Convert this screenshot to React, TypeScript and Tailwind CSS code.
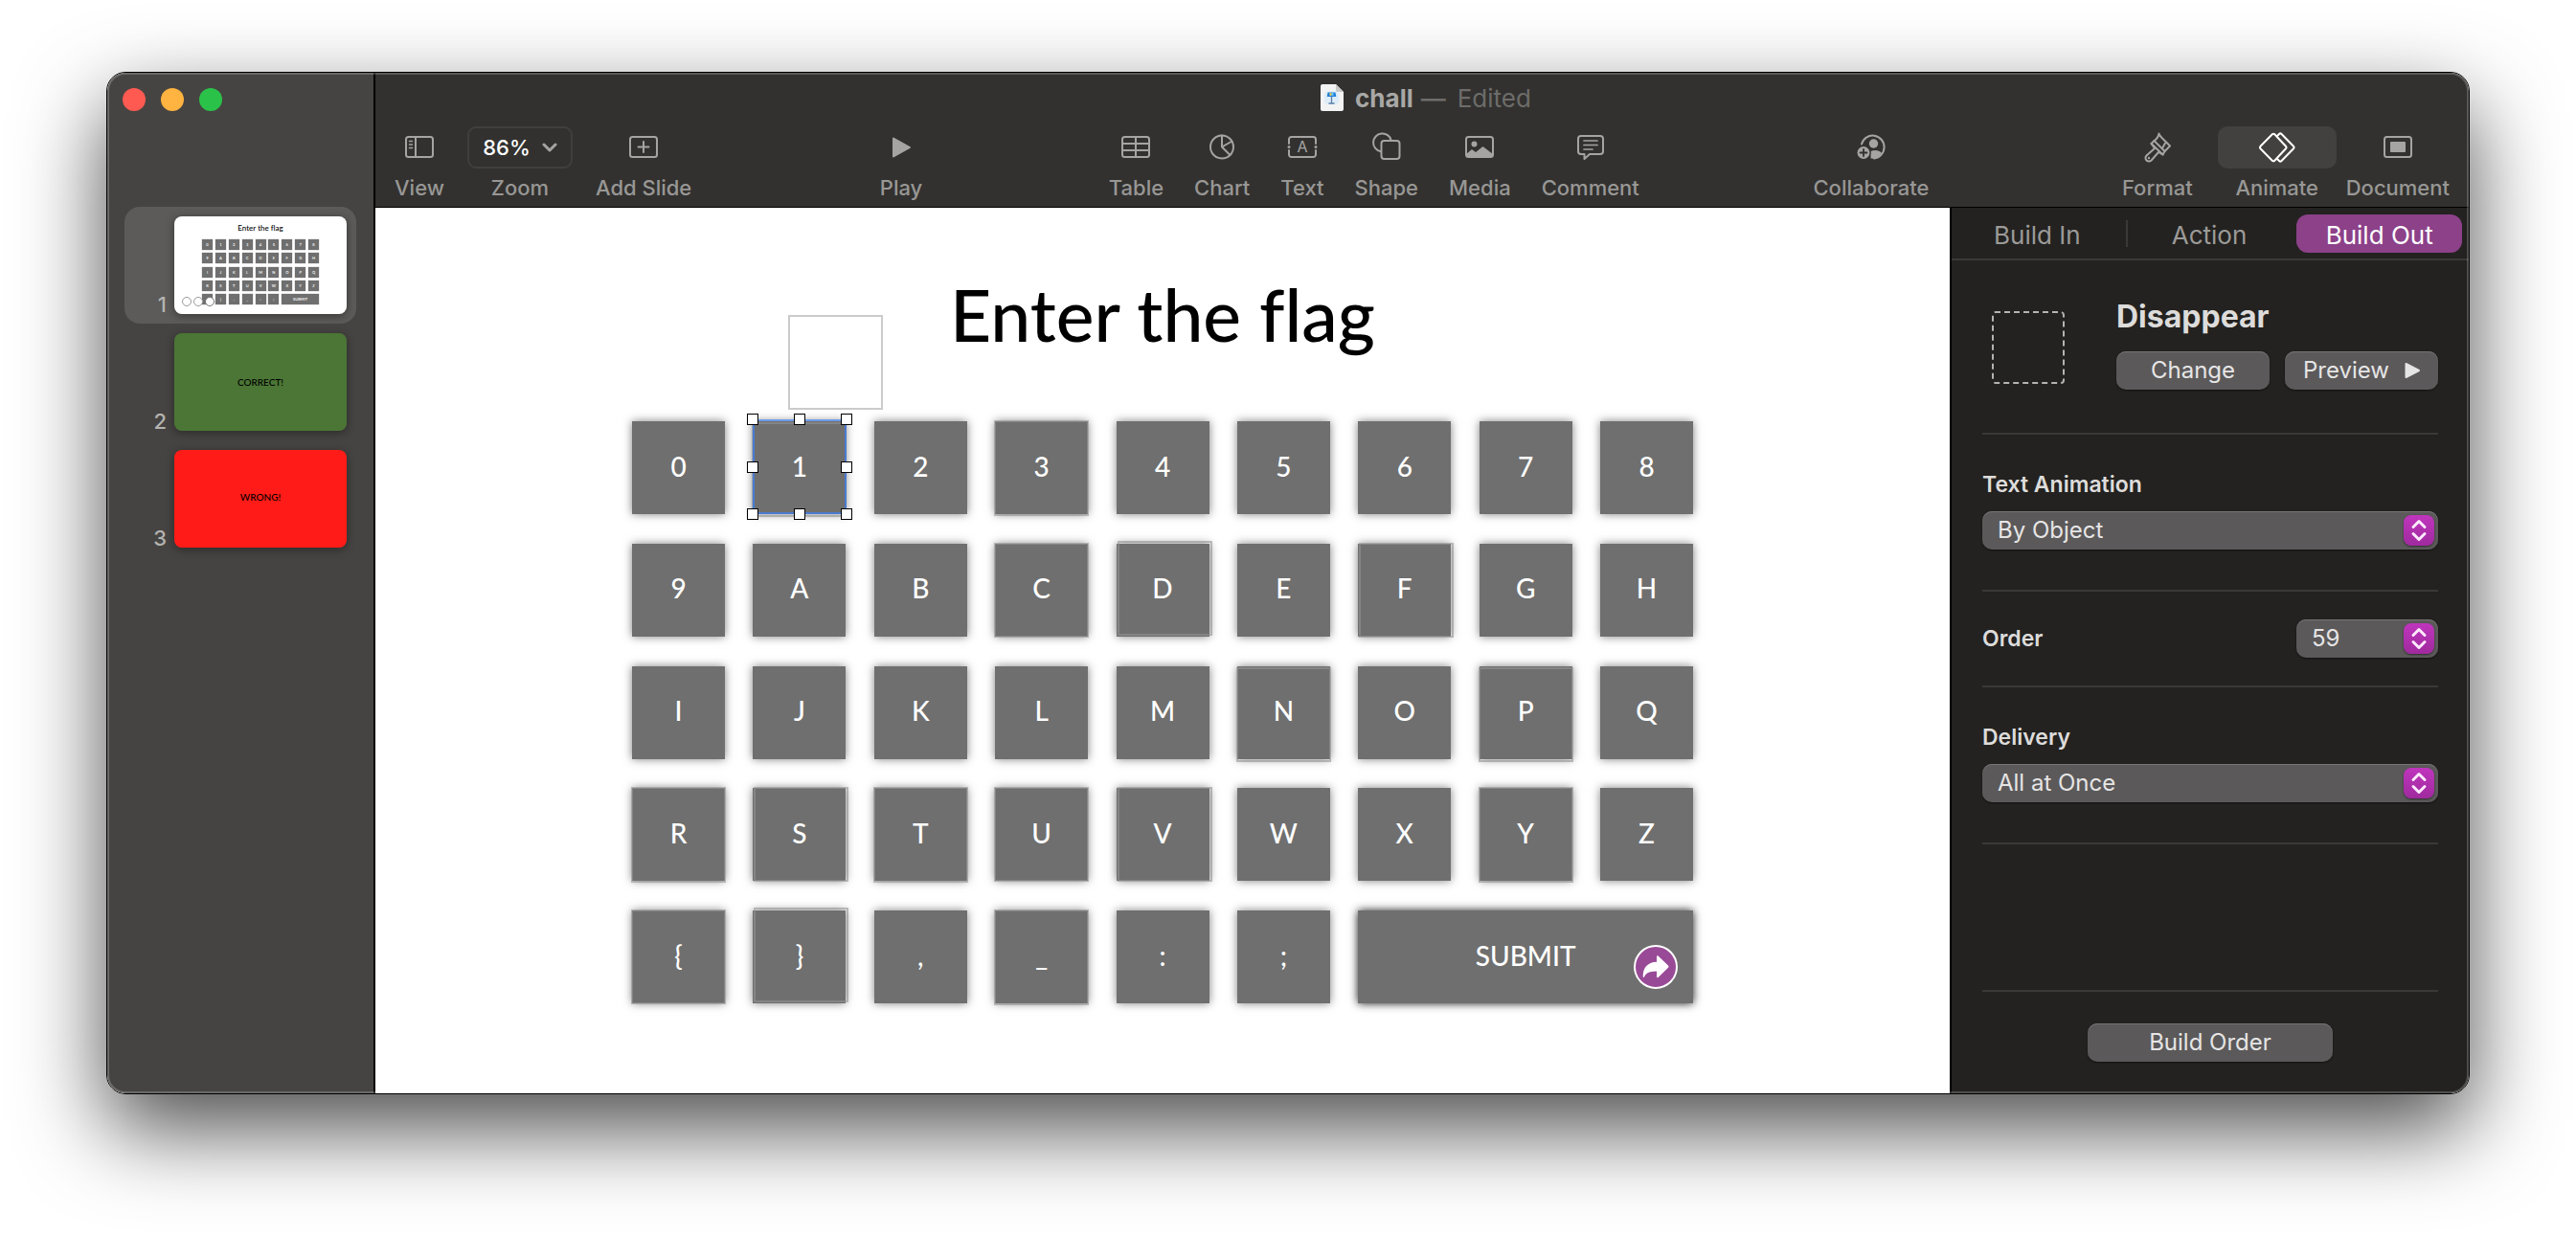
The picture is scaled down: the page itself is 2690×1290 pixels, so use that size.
import React from "react";

const ui = "font-['Inter','Liberation_Sans',sans-serif]";
const slideFont = "font-['Lato','Liberation_Sans',sans-serif] [font-variant-ligatures:none]";

/* ---------- toolbar icons ---------- */

function Icon({ w = 32, h = 32, children }: { w?: number; h?: number; children: React.ReactNode }) {
  return (
    <svg
      width={w}
      height={h}
      viewBox={`0 0 ${w} ${h}`}
      fill="none"
      stroke="currentColor"
      strokeWidth="2"
      strokeLinejoin="round"
      strokeLinecap="round"
      aria-hidden="true"
    >
      {children}
    </svg>
  );
}

const ViewIcon = () => (
  <Icon>
    <rect x="2" y="5" width="28" height="21" rx="2.5" />
    <path d="M12 5v21" />
    <path d="M5.5 9.5h3M5.5 13h3M5.5 16.5h3" strokeWidth="1.5" />
  </Icon>
);
const AddSlideIcon = () => (
  <Icon>
    <rect x="2" y="5" width="28" height="21" rx="2.5" />
    <path d="M16 10v11M10.500 15.500h11" />
  </Icon>
);
const PlayIcon = () => (
  <Icon>
    <path d="M8 6.500v19L25 16z" fill="currentColor" />
  </Icon>
);
const TableIcon = () => (
  <Icon>
    <rect x="2" y="5" width="28" height="21" rx="2.5" />
    <path d="M16 5v21M2 12h28M2 19h28" />
  </Icon>
);
const ChartIcon = () => (
  <Icon>
    <circle cx="16" cy="15.500" r="12" />
    <path d="M16 3.500v12l10.500-6M16 15.500l8.500 8.500" />
  </Icon>
);
const TextIcon = () => (
  <Icon>
    <path d="M2 12V7.500A2.500 2.500 0 0 1 4.500 5h23A2.500 2.500 0 0 1 30 7.500V12M2 19v4.500A2.500 2.500 0 0 0 4.500 26h23a2.500 2.500 0 0 0 2.500-2.500V19" />
    <path d="M2 15.500h.01M30 15.500h.01" strokeWidth="3" />
    <text
      x="16"
      y="21"
      textAnchor="middle"
      fontSize="16"
      fontFamily="Inter, sans-serif"
      fill="currentColor"
      stroke="none"
    >
      A
    </text>
  </Icon>
);
const ShapeIcon = () => (
  <Icon>
    <path d="M10 20.300A9.500 9.500 0 1 1 20.800 8.700" />
    <rect x="10.500" y="9" width="19" height="19" rx="3" />
  </Icon>
);
const MediaIcon = () => (
  <Icon>
    <rect x="2" y="5" width="28" height="21" rx="2.5" />
    <circle cx="10.500" cy="12.500" r="3" fill="currentColor" stroke="none" />
    <path d="M2 23l6-5 4 3 7.500-6L30 23v1.500a1.500 1.500 0 0 1-1.500 1.500h-25A1.500 1.500 0 0 1 2 24.500z" fill="currentColor" stroke="none" />
  </Icon>
);
const CommentIcon = () => (
  <Icon>
    <path d="M6 4h20a3 3 0 0 1 3 3v13a3 3 0 0 1-3 3H15l-5.500 5v-5H6a3 3 0 0 1-3-3V7a3 3 0 0 1 3-3z" />
    <path d="M9 9h14M9 13.500h14M9 18h9" strokeWidth="1.700" />
  </Icon>
);
const CollaborateIcon = () => (
  <Icon>
    <path d="M6 12.500A12 12 0 1 1 19 27.500" />
    <circle cx="18.500" cy="12" r="4.700" fill="currentColor" stroke="none" />
    <path d="M15.500 27.500V20c4-2 9.500-1 11.500 2-2.500 4-7 6.300-11.500 5.500z" fill="currentColor" stroke="none" />
    <circle cx="8" cy="21.500" r="7.700" fill="#32312f" stroke="none" />
    <circle cx="8" cy="21.500" r="6.500" fill="currentColor" stroke="none" />
    <path d="M8 18v7M4.500 21.500h7" stroke="#32312f" strokeWidth="1.800" />
  </Icon>
);
const FormatIcon = () => (
  <Icon>
    <path d="M17.500 1.500c1 4 6 6.500 11.500 13l-5.500 5.500L12.500 9c3-2 4.500-4 5-7.500z" />
    <path d="M24 11.500l-2.500 4.500M12.500 9l-3 3 3.500 5-8.500 7.500a3.500 3.500 0 1 0 5 5L17 21l4.500 2.500 2-3.500" />
    <path d="M9.500 12l12 11.500" />
    <circle cx="7" cy="27" r="1.200" fill="currentColor" stroke="none" />
  </Icon>
);
const AnimateIcon = () => (
  <Icon w={40} h={32}>
    <path d="M14.800 2.300a1.800 1.800 0 0 1 2.500 0L29 14.700a1.800 1.800 0 0 1 0 2.600L17.300 29.700a1.800 1.800 0 0 1-2.500 0L2.500 17.300a1.800 1.800 0 0 1 0-2.600z" />
    <path d="M20 4l2-2a1.800 1.800 0 0 1 2.500 0L37 14.700a1.800 1.800 0 0 1 0 2.600L24.500 30a1.800 1.800 0 0 1-2.500 0l-2-2" />
  </Icon>
);
const DocumentIcon = () => (
  <Icon>
    <rect x="2" y="5" width="28" height="21" rx="2.5" />
    <rect x="8" y="10" width="16" height="11" rx="1" fill="currentColor" stroke="none" />
  </Icon>
);

function Tool({ label, children, wide }: { label: string; children: React.ReactNode; wide?: boolean }) {
  return (
    <button type="button" className="flex flex-col items-center gap-[6px] text-[#a5a4a2]">
      <span
        className={
          wide
            ? "flex h-11 w-[124px] items-center justify-center rounded-[10px] bg-[#42413f] text-white"
            : "flex h-11 items-center justify-center"
        }
      >
        {children}
      </span>
      <span className="text-[22px] leading-7 font-medium whitespace-nowrap text-[#989795]">{label}</span>
    </button>
  );
}

function DocumentBadge() {
  return (
    <svg width="24" height="28" viewBox="0 0 24 28" aria-hidden="true">
      <path d="M2 0h14l8 8v18a2 2 0 0 1-2 2H2a2 2 0 0 1-2-2V2a2 2 0 0 1 2-2z" fill="#f3f3f3" />
      <path d="M16 0l8 8h-7a1 1 0 0 1-1-1z" fill="#c9c9c9" />
      <rect x="4" y="7.500" width="15" height="13.500" rx="4" fill="#dcecf8" />
      <path d="M7.500 8.500h8l.8 4.500H6.800z" fill="#1d7fdc" />
      <rect x="9.500" y="9" width="2" height="3" fill="#f6c945" />
      <rect x="11.500" y="9" width="2" height="3" fill="#6cc8ef" />
      <path d="M11.500 13v6.500M8.500 20h6" stroke="#5c7fa8" strokeWidth="1.300" />
    </svg>
  );
}

function TitleAndTools() {
  return (
    <header className="border-b border-black bg-[#32312f] pb-[6px]">
      <div className="mb-1 flex h-13 items-center justify-center pl-2 text-[26px]">
        <DocumentBadge />
        <h1 className="ml-3 font-bold text-[#a9a8a6]">chall</h1>
        <span className="ml-2 font-medium text-[#6d6c6a]">—</span>
        <span className="ml-3 text-[#6d6c6a]">Edited</span>
      </div>
      <div className="flex items-start pr-5 pl-5">
        <div className="flex items-start gap-6">
          <Tool label="View"><ViewIcon /></Tool>
          <button type="button" className="flex flex-col items-center gap-[6px]">
            <span className="flex h-11 w-[110px] items-center justify-center gap-3 rounded-[9px] border-2 border-[#403f3d] text-[22px] font-medium text-white">
              86%
              <svg width="16" height="10" viewBox="0 0 16 10" fill="none" stroke="#a5a4a2" strokeWidth="3" strokeLinecap="round" strokeLinejoin="round" aria-hidden="true">
                <path d="M2 2l6 6 6-6" />
              </svg>
            </span>
            <span className="text-[22px] leading-7 font-medium text-[#989795]">Zoom</span>
          </button>
          <Tool label="Add Slide"><AddSlideIcon /></Tool>
        </div>
        <span className="grow-[198]" />
        <Tool label="Play"><PlayIcon /></Tool>
        <span className="grow-[196]" />
        <div className="flex items-start gap-8">
          <Tool label="Table"><TableIcon /></Tool>
          <Tool label="Chart"><ChartIcon /></Tool>
          <Tool label="Text"><TextIcon /></Tool>
          <Tool label="Shape"><ShapeIcon /></Tool>
          <Tool label="Media"><MediaIcon /></Tool>
          <Tool label="Comment"><CommentIcon /></Tool>
        </div>
        <span className="grow-[183]" />
        <Tool label="Collaborate"><CollaborateIcon /></Tool>
        <span className="grow-[203]" />
        <div className="flex items-start">
          <Tool label="Format"><FormatIcon /></Tool>
          <div className="mr-2.5 ml-[26px]">
            <Tool label="Animate" wide><AnimateIcon /></Tool>
          </div>
          <Tool label="Document"><DocumentIcon /></Tool>
        </div>
      </div>
    </header>
  );
}

/* ---------- slide ---------- */

const ghostSnug = "-inset-px";
const ghostTall = "-inset-x-px -top-px -bottom-0.5";
const ghostLow = "-inset-x-px top-px -bottom-[3px]";
const ghostUpRight = "left-px -right-[3px] -top-[3px] bottom-px";
const ghostRight = "left-px -right-[3px] -inset-y-px";

const keys: { label: string; ghost?: string }[] = [
  { label: "0" }, { label: "1", ghost: ghostLow }, { label: "2" }, { label: "3", ghost: ghostTall }, { label: "4" },
  { label: "5" }, { label: "6" }, { label: "7" }, { label: "8" },
  { label: "9" }, { label: "A" }, { label: "B" }, { label: "C", ghost: ghostSnug }, { label: "D", ghost: ghostUpRight },
  { label: "E" }, { label: "F", ghost: ghostRight }, { label: "G" }, { label: "H" },
  { label: "I" }, { label: "J" }, { label: "K" }, { label: "L" }, { label: "M" },
  { label: "N", ghost: ghostLow }, { label: "O" }, { label: "P", ghost: ghostLow }, { label: "Q" },
  { label: "R", ghost: ghostTall }, { label: "S", ghost: ghostRight }, { label: "T", ghost: ghostTall },
  { label: "U", ghost: ghostSnug }, { label: "V", ghost: ghostRight }, { label: "W" }, { label: "X" },
  { label: "Y", ghost: ghostTall }, { label: "Z" },
  { label: "{", ghost: ghostSnug }, { label: "}", ghost: ghostUpRight }, { label: "," },
  { label: "_", ghost: ghostTall }, { label: ":" }, { label: ";" },
];

const handles = [
  "-left-2 -top-2",
  "left-1/2 -translate-x-1/2 -top-2",
  "-right-2 -top-2",
  "-left-2 top-1/2 -translate-y-1/2",
  "-right-2 top-1/2 -translate-y-1/2",
  "-left-2 -bottom-2",
  "left-1/2 -translate-x-1/2 -bottom-2",
  "-right-2 -bottom-2",
];

function Selection() {
  return (
    <span className="absolute -top-0.5 -right-px bottom-0 left-0 border-2 border-[#4a7bd0] border-t-[#6f9be8]">
      {handles.map((place) => (
        <span key={place} className={`absolute size-3 border border-black bg-white ${place}`} />
      ))}
    </span>
  );
}

function Slide() {
  return (
    <main className={`flex flex-1 flex-col items-center bg-white pt-[67px] ${slideFont}`}>
      <h2 className="text-[75px] leading-[88px] font-medium text-black">Enter the flag</h2>
      <div className="relative mt-[68px] grid h-[608px] w-[1108px] grid-cols-[repeat(9,97px)] grid-rows-[repeat(5,97px)] place-content-between">
        <span className="absolute -top-[111px] left-[163px] size-[99px] border-2 border-[#cbcbcb]" />
        {keys.map(({ label, ghost }) => (
          <button
            key={label}
            type="button"
            className="relative flex items-center justify-center bg-[#6f6f6f] pb-1 text-[28px] leading-9 font-medium text-white shadow-[0_0_9px_rgba(0,0,0,0.5)]"
          >
            {label}
            {ghost && <span className={`absolute border-2 border-[#949494]/60 ${ghost}`} />}
            {label === "1" && <Selection />}
          </button>
        ))}
        <button
          type="button"
          className="relative col-span-3 flex items-center justify-center bg-[#6f6f6f] pb-1 text-[28px] leading-9 font-medium text-white shadow-[0_0_9px_rgba(0,0,0,0.9)]"
        >
          SUBMIT
          <span className="absolute right-4 bottom-[15px] flex size-[46px] items-center justify-center rounded-full border-2 border-white bg-[#994a97]">
            <svg width="28" height="24" viewBox="0 0 28 24" fill="#fff" aria-hidden="true">
              <path d="M15 1.500c0-1 1-1.500 1.800-.8L27 10.500c.7.700.7 1.500 0 2.200L16.800 22.800c-.8.700-1.800.300-1.800-.8v-5.500C8 16.500 4 18 2 22.500c-.3.700-1.300.6-1.300-.3C.5 13 5.500 7 15 6.800z" />
            </svg>
          </span>
        </button>
      </div>
    </main>
  );
}

/* ---------- slide navigator ---------- */

function KeypadThumb() {
  return (
    <span className={`relative flex h-full flex-col items-center bg-white pt-[7px] ${slideFont}`}>
      <span className="text-[8px] leading-[10px] font-medium text-black">Enter the flag</span>
      <span className="mt-[7px] grid h-[68px] w-[122px] grid-cols-[repeat(9,11px)] grid-rows-[repeat(5,11px)] place-content-between text-[4px] leading-[11px] font-semibold text-white">
        {keys.map(({ label }) => (
          <span key={label} className="bg-[#6f6f6f] text-center shadow-[0_0_1px_rgba(0,0,0,0.5)]">{label}</span>
        ))}
        <span className="col-span-3 bg-[#6f6f6f] text-center shadow-[0_0_1px_rgba(0,0,0,0.5)]">SUBMIT</span>
      </span>
      <span className="absolute bottom-2 left-2 flex gap-0.5">
        <span className="size-[10px] rounded-full border border-[#999] bg-white" />
        <span className="size-[10px] rounded-full border border-[#999] bg-white" />
        <span className="size-[10px] rounded-full border border-[#777] bg-white" />
      </span>
    </span>
  );
}

function Thumb({ n, selected, children }: { n: number; selected?: boolean; children: React.ReactNode }) {
  return (
    <li>
      <button
        type="button"
        className={
          selected
            ? "flex w-full items-end gap-2 rounded-2xl bg-[#5c5b59] p-2.5"
            : "flex w-full items-end gap-2 rounded-2xl p-2.5"
        }
      >
        <span className="flex-1 text-right text-[22px] leading-5 font-medium text-[#b4b3b1]">{n}</span>
        <span className="block h-[102px] w-[180px] overflow-hidden rounded-lg shadow-[0_2px_10px_rgba(0,0,0,0.4)]">
          {children}
        </span>
      </button>
    </li>
  );
}

function Navigator() {
  return (
    <aside className="w-[280px] shrink-0 border-r-2 border-black bg-[#464442]">
      <div className="flex h-14 items-center gap-4 px-4">
        <button type="button" aria-label="Close" className="size-6 rounded-full bg-[#ff5a52]" />
        <button type="button" aria-label="Minimise" className="size-6 rounded-full bg-[#ffb340]" />
        <button type="button" aria-label="Full screen" className="size-6 rounded-full bg-[#2bc24a]" />
      </div>
      <ol className="mt-[84px] px-[18px]">
        <Thumb n={1} selected><KeypadThumb /></Thumb>
        <Thumb n={2}>
          <span className={`flex h-full items-center justify-center bg-[#4b7635] text-[10px] font-medium text-black ${slideFont}`}>CORRECT!</span>
        </Thumb>
        <Thumb n={3}>
          <span className={`flex h-full items-center justify-center bg-[#ff1b17] pb-1 text-[10px] font-medium text-black ${slideFont}`}>WRONG!</span>
        </Thumb>
      </ol>
    </aside>
  );
}

/* ---------- inspector ---------- */

const pushButton =
  "flex h-10 items-center justify-center rounded-[10px] bg-[#5b595a] text-[24px] text-[#e6e5e5] shadow-[inset_0_1px_0_#777576,0_1px_2px_rgba(0,0,0,0.5)]";

function PopUp({ id, options }: { id: string; options: string[] }) {
  return (
    <div className="relative">
      <select
        id={id}
        className="block h-10 w-full appearance-none rounded-[10px] bg-[#5b595a] pl-4 text-[24px] text-[#e6e5e5] shadow-[inset_0_1px_0_#777576,0_1px_2px_rgba(0,0,0,0.5)]"
      >
        {options.map((option) => (
          <option key={option}>{option}</option>
        ))}
      </select>
      <span className="pointer-events-none absolute top-1 right-1 flex size-8 items-center justify-center rounded-lg bg-gradient-to-b from-[#bf35bd] to-[#a02a9e] shadow-[0_1px_2px_rgba(0,0,0,0.5)]">
        <svg width="18" height="24" viewBox="0 0 18 24" fill="none" stroke="#fbe9fb" strokeWidth="3" strokeLinecap="round" strokeLinejoin="round" aria-hidden="true">
          <path d="M3 8.500L9 2.500l6 6M3 15.500l6 6 6-6" />
        </svg>
      </span>
    </div>
  );
}

function Inspector() {
  const rule = "border-b-2 border-[#3a3937]";
  const heading = "block text-[23px] leading-8 font-semibold text-[#dddcdb]";
  return (
    <aside className="flex w-[542px] shrink-0 flex-col border-l-2 border-black bg-[#232220]">
      <div role="tablist" className={`grid h-[55px] grid-cols-3 items-center gap-1.5 pt-px pr-[7px] pl-[3px] text-[26px] text-[#9b9a98] ${rule}`}>
        <button type="button" role="tab" aria-selected="false" className="h-10 pt-0.5">Build In</button>
        <div className="flex items-center">
          <span className="h-7 w-0.5 bg-[#3a3937]" />
          <button type="button" role="tab" aria-selected="false" className="h-10 flex-1 pt-0.5">Action</button>
        </div>
        <button type="button" role="tab" aria-selected="true" className="h-10 rounded-xl bg-[#8c4189] pt-0.5 text-white">Build Out</button>
      </div>

      <div className="flex flex-1 flex-col px-8">
        <section className={`flex items-end pt-[39px] pb-[45px] ${rule}`}>
          <div className="w-[140px] shrink-0 pb-1.5 pl-2.5">
            <svg width="76" height="76" viewBox="0 0 76 76" fill="none" stroke="#b5b4b2" strokeWidth="2" aria-hidden="true">
              <rect x="1" y="1" width="74" height="74" rx="3" strokeDasharray="6 4" strokeDashoffset="1" />
            </svg>
          </div>
          <div className="flex-1">
            <h2 className="text-[32px] leading-10 font-bold text-[#dddcdb]">Disappear</h2>
            <div className="mt-4 grid grid-cols-2 gap-4">
              <button type="button" className={pushButton}>Change</button>
              <button type="button" className={`${pushButton} gap-4`}>
                Preview
                <svg width="16" height="18" viewBox="0 0 16 18" fill="currentColor" stroke="currentColor" strokeWidth="2" strokeLinejoin="round" aria-hidden="true">
                  <path d="M1.500 2v14L15 9z" />
                </svg>
              </button>
            </div>
          </div>
        </section>

        <section className={`pt-9 pb-[42px] ${rule}`}>
          <label htmlFor="text-animation" className={heading}>Text Animation</label>
          <div className="mt-3">
            <PopUp id="text-animation" options={["By Object", "By Word", "By Character"]} />
          </div>
        </section>

        <section className={`flex items-center justify-between py-[29px] ${rule}`}>
          <label htmlFor="order" className={heading}>Order</label>
          <div className="w-[148px]">
            <PopUp id="order" options={["59"]} />
          </div>
        </section>

        <section className={`pt-9 pb-[42px] ${rule}`}>
          <label htmlFor="delivery" className={heading}>Delivery</label>
          <div className="mt-3">
            <PopUp id="delivery" options={["All at Once"]} />
          </div>
        </section>

        <div className="mt-auto flex justify-center border-t-2 border-[#3a3937] py-[33px]">
          <button type="button" className={`${pushButton} w-64`}>Build Order</button>
        </div>
      </div>
    </aside>
  );
}

export default function App() {
  return (
    <div className={`flex min-h-screen bg-white px-[111px] pt-[75px] pb-[147px] ${ui}`}>
      <div className="relative flex flex-1 rounded-[20px] border border-black shadow-[0_36px_90px_rgba(0,0,0,0.7)]">
        <div className="flex flex-1 overflow-hidden rounded-[19px]">
          <Navigator />
          <div className="flex min-w-0 flex-1 flex-col">
            <TitleAndTools />
            <div className="flex flex-1">
              <Slide />
              <Inspector />
            </div>
          </div>
        </div>
        <div className="pointer-events-none absolute inset-0 rounded-[19px] border-2 border-white/20" />
      </div>
    </div>
  );
}
